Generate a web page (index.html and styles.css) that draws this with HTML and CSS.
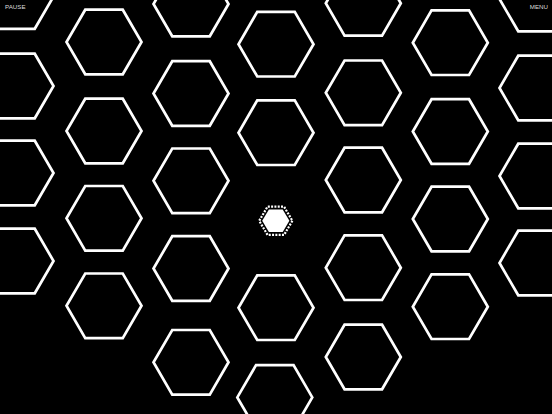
FILE: index.html
```html
<!DOCTYPE html>
<html>
<head>
<meta charset="utf-8">
<link rel="stylesheet" href="styles.css">
</head>
<body>
<div class="stage">
  <svg class="board" width="552" height="414" viewBox="0 0 552 414" xmlns="http://www.w3.org/2000/svg">
    <defs>
      <polygon id="h" points="37.5,0 18.75,32.3 -18.75,32.3 -37.5,0 -18.75,-32.3 18.75,-32.3"/>
    </defs>
    <g class="cells">
      <use href="#h" x="16" y="-3.5"/>
      <use href="#h" x="16" y="86"/>
      <use href="#h" x="16" y="173"/>
      <use href="#h" x="16" y="261"/>

      <use href="#h" x="104" y="42"/>
      <use href="#h" x="104" y="131"/>
      <use href="#h" x="104" y="218.3"/>
      <use href="#h" x="104" y="305.8"/>

      <use href="#h" x="191" y="4"/>
      <use href="#h" x="191" y="93.5"/>
      <use href="#h" x="191" y="180.8"/>
      <use href="#h" x="191" y="268.5"/>
      <use href="#h" x="191" y="362.3"/>

      <use href="#h" x="276" y="44.2"/>
      <use href="#h" x="276" y="132.7"/>
      <use href="#h" x="276" y="307.7"/>
      <use href="#h" x="274.8" y="397.4"/>

      <use href="#h" x="363.3" y="3.3"/>
      <use href="#h" x="363.3" y="92.8"/>
      <use href="#h" x="363.3" y="180"/>
      <use href="#h" x="363.3" y="267.7"/>
      <use href="#h" x="363.3" y="357"/>

      <use href="#h" x="450.3" y="42.7"/>
      <use href="#h" x="450.3" y="131.5"/>
      <use href="#h" x="450.3" y="219"/>
      <use href="#h" x="450.3" y="306.7"/>

      <use href="#h" x="537" y="-1"/>
      <use href="#h" x="537" y="88"/>
      <use href="#h" x="537" y="176"/>
      <use href="#h" x="537" y="263"/>
    </g>
    <g class="player" transform="translate(275.8 220.8)">
      <polygon class="player-ring" points="16.6,0 8.3,14.1 -8.3,14.1 -16.6,0 -8.3,-14.1 8.3,-14.1"/>
      <polygon class="player-core" points="13.6,0 6.9,11.2 -6.9,11.2 -13.6,0 -6.9,-11.2 6.9,-11.2"/>
    </g>
  </svg>
  <div class="hud">
    <span class="hud-btn">PAUSE</span>
    <span class="hud-btn">MENU</span>
  </div>
</div>
</body>
</html>
```
FILE: styles.css
```css
html, body {
  margin: 0;
  padding: 0;
  background: #000;
}
body {
  width: 552px;
  height: 414px;
  overflow: hidden;
  font-family: "Liberation Sans", Arial, sans-serif;
}
.stage {
  position: relative;
  width: 552px;
  height: 414px;
}
.board {
  display: block;
}
.cells use {
  fill: none;
  stroke: #fff;
  stroke-width: 2.7;
  stroke-linejoin: miter;
}
.player-ring {
  fill: none;
  stroke: #fff;
  stroke-width: 2.2;
  stroke-dasharray: 2 1.3;
}
.player-core {
  fill: #fff;
}
.hud {
  position: absolute;
  top: 0;
  left: 0;
  right: 0;
  display: flex;
  justify-content: space-between;
  padding: 4px 4px 0 5px;
}
.hud-btn {
  font-size: 6.2px;
  line-height: 6px;
  color: #dcdcdc;
}
```
